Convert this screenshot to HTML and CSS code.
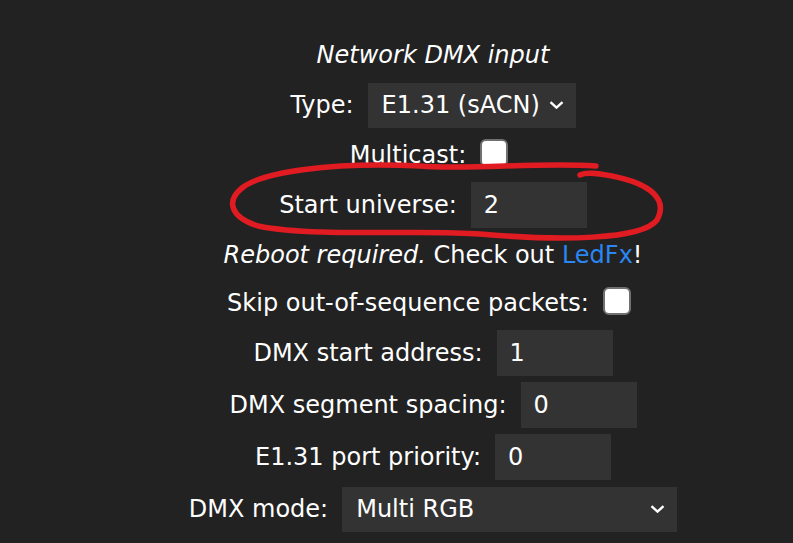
FILE: index.html
```html
<!DOCTYPE html>
<html>
<head>
<meta charset="utf-8">
<title>Network DMX input</title>
<link rel="stylesheet" href="styles.css">
</head>
<body>
<div class="page">
  <div class="row heading"><i>Network DMX input</i></div>
  <div class="row tall">
    <span>Type:</span>
    <div class="field select type-select"><span>E1.31 (sACN)</span><svg class="chev" width="15" height="8" viewBox="0 0 15 8"><polyline points="1.5,1.2 7.5,6.6 13.5,1.2" fill="none" stroke="#fff" stroke-width="2.4"/></svg></div>
  </div>
  <div class="row">
    <span>Multicast:</span>
    <span class="check"></span>
  </div>
  <div class="row tall">
    <span>Start universe:</span>
    <span class="field num">2</span>
  </div>
  <div class="row">
    <span><i>Reboot required.</i> Check out <a href="#">LedFx</a>!</span>
  </div>
  <div class="row">
    <span>Skip out-of-sequence packets:</span>
    <span class="check"></span>
  </div>
  <div class="row tall">
    <span>DMX start address:</span>
    <span class="field num">1</span>
  </div>
  <div class="row tall">
    <span>DMX segment spacing:</span>
    <span class="field num">0</span>
  </div>
  <div class="row tall">
    <span>E1.31 port priority:</span>
    <span class="field num">0</span>
  </div>
  <div class="row tall">
    <span>DMX mode:</span>
    <div class="field select mode-select"><span>Multi RGB</span><svg class="chev" width="15" height="8" viewBox="0 0 15 8"><polyline points="1.5,1.2 7.5,6.6 13.5,1.2" fill="none" stroke="#fff" stroke-width="2.4"/></svg></div>
  </div>
</div>
<svg class="annot" width="793" height="543" viewBox="0 0 793 543">
  <path d="M 596 166 C 540 162, 470 170, 420 166 C 330 162, 262 172, 242 188 C 226 201, 230 217, 258 226 C 318 238, 420 229, 480 234 C 560 241, 642 240, 657 220 C 668 200, 652 184, 612 176 C 596 173, 586 172, 580 175" fill="none" stroke="#e01b22" stroke-width="5.5" stroke-linecap="round" stroke-linejoin="round"/>
</svg>
</body>
</html>
```

FILE: styles.css
```css
html, body {
  margin: 0;
  background: #222;
}

body {
  overflow: hidden;
  font-family: "DejaVu Sans", Verdana, sans-serif;
  font-size: 24px;
  color: #fff;
}

.page {
  box-sizing: border-box;
  width: 100%;
  padding: 31px 0 0 73px;
  display: flex;
  flex-direction: column;
}

.row {
  height: 48px;
  display: flex;
  align-items: center;
  justify-content: center;
  gap: 14px;
  white-space: nowrap;
}

.row.tall {
  height: 52px;
}

.heading {
  font-style: italic;
}

.field {
  background: #333;
  height: 46px;
  box-sizing: border-box;
  display: flex;
  align-items: center;
  padding: 0 13px;
}

.num {
  width: 116px;
}

.select {
  height: 45px;
  justify-content: space-between;
  padding: 0 12px 0 14px;
}

.type-select {
  width: 208px;
}

.mode-select {
  width: 335px;
}

.chev {
  display: block;
}

.check {
  width: 28px;
  height: 28px;
  box-sizing: border-box;
  background: #fff;
  border: 2px solid #707070;
  border-radius: 6px;
  margin: 0 8px 4px 0;
}

a {
  color: #2a86f2;
  text-decoration: none;
}

.annot {
  position: absolute;
  left: 0;
  top: 0;
  pointer-events: none;
}
```
